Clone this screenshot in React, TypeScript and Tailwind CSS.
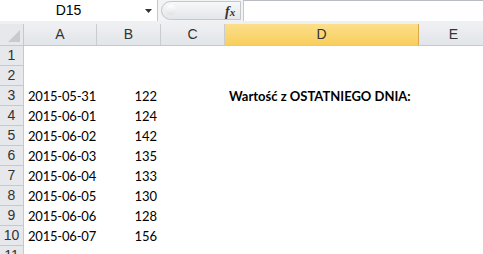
import React from "react";

const cols = [
  { k: "A", w: 73 },
  { k: "B", w: 64 },
  { k: "C", w: 64 },
  { k: "D", w: 194 },
  { k: "E", w: 70 },
];

const dates = [
  ["2015-05-31", "122"],
  ["2015-06-01", "124"],
  ["2015-06-02", "142"],
  ["2015-06-03", "135"],
  ["2015-06-04", "133"],
  ["2015-06-05", "130"],
  ["2015-06-06", "128"],
  ["2015-06-07", "156"],
];

export default function App() {
  const rows = Array.from({ length: 11 }, (_, i) => i + 1);
  return (
    <div
      className="w-[483px] h-[254px] overflow-hidden bg-white text-[13px] text-black"
      style={{ fontFamily: "Lato, 'Liberation Sans', sans-serif" }}
    >
      {/* formula bar */}
      <div className="flex h-[21px] border-b border-[#d0d4d9] bg-[#e8ebef]">
        <div className="relative flex h-[21px] w-[158px] items-center justify-center border-r border-[#c4c8cd] bg-white">
          <span className="-ml-[20px]" style={{ fontFamily: "'Liberation Sans', sans-serif", fontSize: 14 }}>D15</span>
          <svg className="absolute left-[145px] top-[9px]" width="7" height="4" viewBox="0 0 7 4">
            <path d="M0 0h7L3.5 4z" fill="#333" />
          </svg>
        </div>
        <div className="relative h-[21px] w-[85px] bg-[#f2f3f5]">
          <div className="absolute left-[3px] top-[1px] h-[19px] w-[80px] rounded-l-[10px] border border-[#c3c7cc] bg-gradient-to-b from-[#f7f8f9] to-[#e3e6ea]" />
          <div className="absolute left-[8px] top-[5px] h-[10px] w-[10px] rounded-full bg-gradient-to-b from-[#ffffff] to-[#dfe2e6]" />
          <span
            className="absolute left-[67px] top-[1px] text-[14px] italic font-bold text-[#333]"
            style={{ fontFamily: "'Liberation Serif', serif" }}
          >
            f<span className="text-[11px]">x</span>
          </span>
        </div>
        <div className="h-[21px] flex-1 border-l border-[#c4c8cd] border-t border-t-[#b9bdc3] bg-white" />
      </div>
      <div className="h-[3px] bg-[#eef0f2]" />
      {/* header row */}
      <div className="flex h-[22px] border-b border-[#c5c9ce]">
        <div className="relative w-[24px] shrink-0 border-r border-[#c5c9ce] bg-[#e6e8eb]">
          <svg className="absolute right-[3px] bottom-[3px]" width="12" height="12" viewBox="0 0 12 12">
            <path d="M12 0V12H0z" fill="#c7cacf" />
          </svg>
        </div>
        {cols.map((c) => (
          <div
            key={c.k}
            className={
              c.k === "D"
                ? "flex shrink-0 items-center justify-center border-r border-[#d8a84a] bg-gradient-to-b from-[#fbdf8a] to-[#f8cf5c] text-[#333]"
                : "flex shrink-0 items-center justify-center border-r border-[#c9cdd2] bg-gradient-to-b from-[#eef0f2] to-[#e2e5e9] text-[#333]"
            }
            style={{ width: c.w, fontFamily: "'Liberation Sans', sans-serif", fontSize: 14 }}
          >
            {c.k}
          </div>
        ))}
      </div>
      {/* body */}
      {rows.map((r) => {
        const d = r >= 3 && r <= 10 ? dates[r - 3] : null;
        return (
          <div key={r} className="flex h-[20px] whitespace-nowrap">
            <div
              className="flex w-[24px] shrink-0 items-center justify-center border-r border-b border-[#c5c9ce] bg-[#e6e8eb] text-[#333]"
              style={{ fontFamily: "'Liberation Sans', sans-serif", fontSize: 14 }}
            >
              {r}
            </div>
            <div className="flex w-[73px] shrink-0 items-center pl-[4px] pt-[2px] tracking-[-0.2px]">{d ? d[0] : ""}</div>
            <div className="flex w-[64px] shrink-0 items-center justify-end pr-[4px] pt-[2px]">{d ? d[1] : ""}</div>
            <div className="w-[64px] shrink-0" />
            <div className="flex w-[194px] shrink-0 items-center pl-[4px] pt-[2px] font-bold">
              {r === 3 ? "Wartość z OSTATNIEGO DNIA:" : ""}
            </div>
            <div className="flex-1" />
          </div>
        );
      })}
    </div>
  );
}
